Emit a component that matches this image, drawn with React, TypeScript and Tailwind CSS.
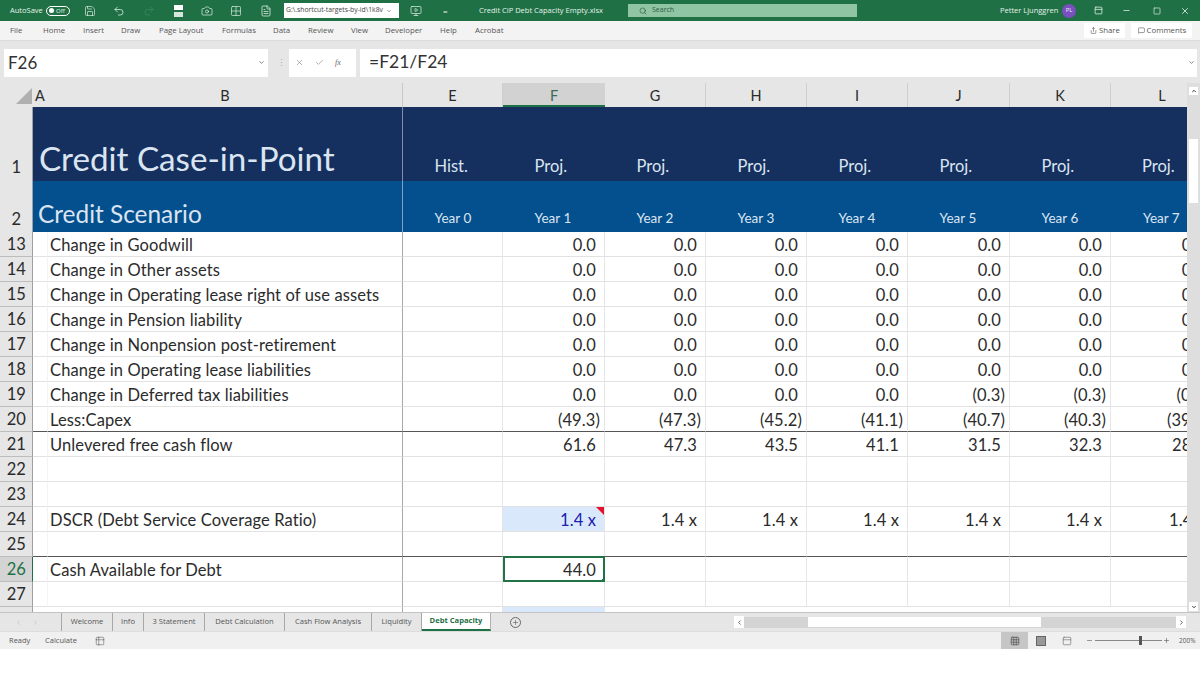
import React from "react";
import { Save, Undo2, Redo2, Camera, Grid2x2, Grid3x3, FileText, MonitorPlay, Search, Minus, Square, X, Share, MessageSquare, Check, Plus, ChevronDown, ChevronLeft, ChevronRight, ChevronUp, Table2, PanelTop } from "lucide-react";

const widths = ["w-[100px]", "w-[102px]", "w-[101px]", "w-[101px]", "w-[101px]", "w-[102px]", "w-[101px]"];
const letters = ["E", "F", "G", "H", "I", "J", "K"];
const f = { fontFamily: "Lato, 'Liberation Sans', sans-serif" } as const;

type RowData = { n: number; label?: string; v?: string[]; line?: boolean };
const z = ["", "0.0", "0.0", "0.0", "0.0", "0.0", "0.0", "0.0"];
const rows: RowData[] = [
  { n: 13, label: "Change in Goodwill", v: z },
  { n: 14, label: "Change in Other assets", v: z },
  { n: 15, label: "Change in Operating lease right of use assets", v: z },
  { n: 16, label: "Change in Pension liability", v: z },
  { n: 17, label: "Change in Nonpension post-retirement", v: z },
  { n: 18, label: "Change in Operating lease liabilities", v: z },
  { n: 19, label: "Change in Deferred tax liabilities", v: ["", "0.0", "0.0", "0.0", "0.0", "(0.3)", "(0.3)", "(0.3)"] },
  { n: 20, label: "Less:Capex", v: ["", "(49.3)", "(47.3)", "(45.2)", "(41.1)", "(40.7)", "(40.3)", "(39.9)"], line: true },
  { n: 21, label: "Unlevered free cash flow", v: ["", "61.6", "47.3", "43.5", "41.1", "31.5", "32.3", "28.4"] },
  { n: 22 },
  { n: 23 },
  { n: 24, label: "DSCR (Debt Service Coverage Ratio)", v: ["", "1.4 x", "1.4 x", "1.4 x", "1.4 x", "1.4 x", "1.4 x", "1.4 x"] },
  { n: 25, line: true },
  { n: 26, label: "Cash Available for Debt" },
  { n: 27 },
];

function Num({ t }: { t?: string }) {
  if (!t) return null;
  return <span className={t.startsWith("(") ? "pr-[4px]" : "pr-[8px]"}>{t}</span>;
}

function DataRow({ r }: { r: RowData }) {
  const bottom = r.line ? "border-b border-b-[#555555]" : "border-b border-b-[#e2e2e2]";
  const sel = r.n === 26;
  return (
    <div className="flex h-[25px] shrink-0 text-[16.5px] leading-[26px] tracking-[0.11px] text-[#2b2b2b]" style={f}>
      <div className={`w-[33px] shrink-0 flex justify-end items-center pr-[6px] border-r border-b ${sel ? "bg-[#d4d4d4] text-[#1e7145] border-r-[#1e7145] border-b-[#bdbdbd]" : "bg-[#e6e6e6] border-r-[#a0a0a0] border-b-[#bdbdbd]"}`}>{r.n}</div>
      <div className={`w-[15px] shrink-0 border-r border-r-[#f4f4f4] ${bottom}`} />
      <div className={`w-[355px] shrink-0 pl-[2px] border-r border-r-[#a8a8a8] whitespace-nowrap ${bottom}`}>{r.label}</div>
      {widths.map((w, i) => {
        const isF = i === 1;
        const isSel = sel && isF;
        const isBlue = r.n === 24 && isF;
        return (
          <div key={i} className={`${w} shrink-0 relative text-right ${isSel ? "border-2 border-[#217346] leading-[24px] -mt-px h-[26px]" : `border-r border-r-[#e6e6e6] ${bottom}`} ${isBlue ? "bg-[#d9e8fa] text-[#2020b0]" : ""}`}>
            {isSel ? <span className="pr-[7px]">44.0</span> : <Num t={r.v?.[i]} />}
            {isBlue && <span className="absolute right-0 top-0 w-0 h-0 border-l-[8px] border-l-transparent border-t-[8px] border-t-[#e8112d]" />}
            {isSel && <span className="absolute -right-[2px] -bottom-[2px] w-[3px] h-[3px] bg-[#217346]" />}
          </div>
        );
      })}
      <div className={`w-[76px] shrink-0 overflow-hidden ${bottom}`}>
        <div className="w-[102px] text-right"><Num t={r.v?.[7]} /></div>
      </div>
    </div>
  );
}

function Tab({ t, w, active }: { t: string; w: string; active?: boolean }) {
  return (
    <div className={`${w} shrink-0 h-[18px] flex items-center justify-center whitespace-nowrap border-r ${active ? "bg-white text-[#1e7145] font-bold border-b-2 border-b-[#1e7145] border-r-[#b0b0b0]" : "border-r-[#a8a8a8]"}`}>{t}</div>
  );
}

export default function App() {
  return (
    <div className="w-[1200px] h-[675px] bg-white overflow-hidden flex flex-col" style={{ fontFamily: "'Open Sans', 'Liberation Sans', sans-serif" }}>
      {/* title bar */}
      <div className="h-[21px] shrink-0 bg-[#1f7145] text-[#e6f1ea] flex items-center text-[7.5px] whitespace-nowrap">
        <span className="ml-[10px] w-[36px]">AutoSave</span>
        <span className="w-[24px] h-[10px] rounded-full border border-white flex items-center pl-[2px] gap-[2px] text-[6px] leading-none">
          <span className="w-[5px] h-[5px] rounded-full bg-white shrink-0" />Off
        </span>
        <Save size={12} strokeWidth={1.3} className="ml-[14px]" />
        <Undo2 size={12} strokeWidth={1.5} className="ml-[17px]" />
        <Redo2 size={12} strokeWidth={1.5} className="ml-[18px] text-[#3f8a62]" />
        <span className="ml-[19px] w-[9px] h-[12px] flex flex-col gap-[2px]"><span className="h-[5px] bg-white" /><span className="h-[5px] bg-[#d5e6dc]" /></span>
        <Camera size={12} strokeWidth={1.4} className="ml-[18px]" />
        <Grid2x2 size={12} strokeWidth={1.3} className="ml-[17px]" />
        <FileText size={12} strokeWidth={1.5} className="ml-[18px]" />
        <div className="ml-[12px] w-[115px] h-[15px] bg-white text-[#444444] text-[6.8px] flex items-center pl-[2px] gap-[3px]">G:\.shortcut-targets-by-id\1k8v <ChevronDown size={6} /></div>
        <MonitorPlay size={12} strokeWidth={1.4} className="ml-[11px]" />
        <span className="ml-[21px] w-[6px] text-[8px]">=</span>
        <span className="ml-[30px] w-[127px] flex items-center gap-[3px]">Credit CiP Debt Capacity Empty.xlsx <ChevronDown size={7} /></span>
        <div className="ml-[22px] w-[229px] h-[13px] bg-[#8fc5a3] text-[#2e5a41] flex items-center pl-[11px] gap-[5px] text-[7px]"><Search size={8} />Search</div>
        <span className="ml-[143px] w-[56px]">Petter Ljunggren</span>
        <span className="ml-[6px] w-[14px] h-[14px] rounded-full bg-[#7a4fc0] text-[6px] flex items-center justify-center">PL</span>
        <PanelTop size={9} className="ml-[18px]" />
        <Minus size={9} className="ml-[19px]" />
        <Square size={8} className="ml-[22px]" />
        <X size={10} className="ml-[19px]" />
      </div>
      {/* menu */}
      <div className="h-[20px] shrink-0 bg-[#f3f3f3] border-b border-b-[#dcdcdc] text-[#555555] flex items-center text-[7.8px] whitespace-nowrap">
        <span className="ml-[10px] w-[33px]">File</span>
        <span className="w-[40px]">Home</span>
        <span className="w-[38px]">Insert</span>
        <span className="w-[38px]">Draw</span>
        <span className="w-[63px]">Page Layout</span>
        <span className="w-[51px]">Formulas</span>
        <span className="w-[35px]">Data</span>
        <span className="w-[43px]">Review</span>
        <span className="w-[34px]">View</span>
        <span className="w-[55px]">Developer</span>
        <span className="w-[35px]">Help</span>
        <span>Acrobat</span>
        <div className="ml-[581px] w-[41px] h-[15px] bg-white flex items-center justify-center gap-[2px]"><Share size={7} />Share</div>
        <div className="ml-[6px] w-[61px] h-[15px] bg-white flex items-center justify-center gap-[2px]"><MessageSquare size={7} />Comments</div>
      </div>
      {/* formula bar */}
      <div className="h-[42px] shrink-0 bg-[#e6e6e6] flex items-center pt-[1px]">
        <div className="ml-[4px] w-[264px] h-[28px] bg-white text-[#333333] text-[17px] pl-[4px] flex items-center justify-between pr-[3px]" style={f}>F26<ChevronDown size={7} /></div>
        <span className="ml-[9px] w-[12px] text-[#aaaaaa] text-[9px]">⋮</span>
        <div className="w-[67px] h-[28px] bg-white flex items-center gap-[11px] pl-[6px] text-[#999999]">
          <X size={9} /><Check size={9} /><span className="italic text-[8px] text-[#666666]" style={{ fontFamily: "'Liberation Serif', serif" }}>fx</span>
        </div>
        <div className="ml-[4px] w-[837px] h-[28px] bg-white text-[#333333] text-[17.5px] pl-[9px] pr-[2px] flex items-center justify-between" style={f}>=F21/F24<ChevronDown size={7} /></div>
      </div>
      {/* sheet */}
      <div className="flex h-[529px] shrink-0">
        <div className="w-[1187px] shrink-0 flex flex-col overflow-hidden">
          {/* column headers */}
          <div className="flex h-[24px] shrink-0 bg-[#e6e6e6] text-[14.5px] leading-[25px] text-[#2b2b2b] text-center" style={f}>
            <div className="w-[33px] shrink-0 relative">
              <span className="absolute right-[1px] bottom-[3px] w-0 h-0 border-l-[16px] border-l-transparent border-b-[16px] border-b-[#b0b0b0]" />
            </div>
            <div className="w-[15px] shrink-0 text-left pl-[2px]">A</div>
            <div className="w-[355px] shrink-0 border-r border-r-[#c8c8c8]">B</div>
            {letters.map((l, i) => (
              <div key={l} className={`${widths[i]} shrink-0 ${l === "F" ? "bg-[#d2d2d2] border-b-2 border-b-[#1e7145] text-[#3f6b53]" : "border-r border-r-[#cfcfcf]"}`}>{l}</div>
            ))}
            <div className="w-[76px] shrink-0 pl-[26px]">L</div>
          </div>
          {/* row 1 */}
          <div className="flex h-[74px] shrink-0 bg-[#15305f] text-[#dbe5f1]" style={f}>
            <div className="w-[33px] shrink-0 bg-[#e6e6e6] border-r border-r-[#a0a0a0] text-[#2b2b2b] text-[16.5px] flex justify-end items-end pb-[1px] pr-[11px]">1</div>
            <div className="w-[370px] shrink-0 border-r border-r-[#7f8fa8] pl-[6px] flex items-end text-[33.2px] leading-[46px] whitespace-nowrap">Credit Case-in-Point</div>
            {letters.map((l, i) => (
              <div key={l} className={`${widths[i]} shrink-0 pl-[31.5px] flex items-end pb-[2px] text-[16.5px]`}>{l === "E" ? "Hist." : "Proj."}</div>
            ))}
            <div className="w-[76px] shrink-0 pl-[31px] flex items-end pb-[2px] text-[16.5px]">Proj.</div>
          </div>
          {/* row 2 */}
          <div className="flex h-[51px] shrink-0 bg-[#04508f] text-[#dbe5f1]" style={f}>
            <div className="w-[33px] shrink-0 bg-[#e6e6e6] border-r border-r-[#a0a0a0] text-[#2b2b2b] text-[16.5px] flex justify-end items-end pr-[11px]">2</div>
            <div className="w-[370px] shrink-0 border-r border-r-[#7f9fc0] pl-[5px] flex items-end pb-[1px] text-[24.4px] leading-[34px] whitespace-nowrap">Credit Scenario</div>
            {letters.map((l, i) => (
              <div key={l} className={`${widths[i]} shrink-0 pl-[31.5px] flex items-end pb-[4px] text-[13.5px]`}>Year {i}</div>
            ))}
            <div className="w-[76px] shrink-0 pl-[32px] flex items-end pb-[4px] text-[13.5px] whitespace-nowrap">Year 7</div>
          </div>
          {rows.map((r) => <DataRow key={r.n} r={r} />)}
          {/* row 28 sliver */}
          <div className="flex h-[6px] shrink-0">
            <div className="w-[33px] shrink-0 bg-[#e6e6e6] border-r border-r-[#a0a0a0]" />
            <div className="w-[370px] shrink-0 border-r border-r-[#a8a8a8]" />
            <div className="w-[100px] shrink-0 border-r border-r-[#e6e6e6]" />
            <div className="w-[102px] shrink-0 bg-[#d9e8fa]" />
          </div>
        </div>
        {/* vertical scroll */}
        <div className="w-[13px] shrink-0 bg-[#dedede] flex flex-col items-end pr-[2px]">
          <div className="w-[9px] h-[8px] mt-[4px] bg-white flex items-center justify-center"><ChevronUp size={6} strokeWidth={3} /></div>
          <div className="w-[9px] h-[64px] mt-[44px] bg-white" />
          <div className="flex-1" />
          <div className="w-[9px] h-[9px] mb-[1px] bg-white flex items-center justify-center"><ChevronDown size={6} strokeWidth={3} /></div>
        </div>
      </div>
      {/* tabs */}
      <div className="h-[19px] shrink-0 bg-[#e6e6e6] border-t border-t-[#c4c4c4] text-[7.6px] text-[#555555] flex items-center whitespace-nowrap">
        <span className="w-[62px] h-[18px] border-r border-r-[#a8a8a8] flex items-center gap-[10px] pl-[15px] text-[#b5b5b5]"><ChevronLeft size={7} /><ChevronRight size={7} /></span>
        <Tab t="Welcome" w="w-[51px]" />
        <Tab t="Info" w="w-[31px]" />
        <Tab t="3 Statement" w="w-[61px]" />
        <Tab t="Debt Calculation" w="w-[80px]" />
        <Tab t="Cash Flow Analysis" w="w-[87px]" />
        <Tab t="Liquidity" w="w-[50px]" />
        <Tab t="Debt Capacity" w="w-[69px]" active />
        <span className="ml-[19px] w-[11px] h-[11px] rounded-full border border-[#666666] flex items-center justify-center"><Plus size={7} /></span>
        <div className="ml-[213px] w-[10px] h-[12px] bg-white flex items-center justify-center"><ChevronLeft size={7} strokeWidth={3} /></div>
        <div className="w-[432px] h-[11px] bg-[#d4d4d4] pl-[64px] flex">
          <div className="w-[233px] h-[10px] bg-white" />
        </div>
        <div className="w-[10px] h-[12px] bg-white flex items-center justify-center"><ChevronRight size={7} strokeWidth={3} /></div>
      </div>
      {/* status */}
      <div className="h-[18px] shrink-0 bg-[#f0f0f0] border-t border-t-[#dddddd] text-[7.5px] text-[#555555] flex items-center whitespace-nowrap">
        <span className="ml-[9px] w-[36px]">Ready</span>
        <span className="w-[50px]">Calculate</span>
        <Table2 size={10} strokeWidth={1.3} />
        <div className="ml-[896px] w-[27px] h-[18px] bg-[#c6c6c6] flex items-center justify-center"><Grid3x3 size={10} strokeWidth={1.8} /></div>
        <span className="ml-[8px] w-[10px] h-[10px] bg-[#999999] border border-[#666666]" />
        <PanelTop size={10} strokeWidth={1.3} className="ml-[16px]" />
        <Minus size={7} className="ml-[14px]" />
        <div className="ml-[2px] w-[67px] h-px bg-[#888888] relative"><span className="absolute left-[44px] -top-[4px] w-[3px] h-[9px] bg-[#555555]" /></div>
        <Plus size={7} className="ml-[1px]" />
        <span className="ml-[9px] text-[6.5px]">200%</span>
      </div>
      <div className="flex-1 bg-white" />
    </div>
  );
}
